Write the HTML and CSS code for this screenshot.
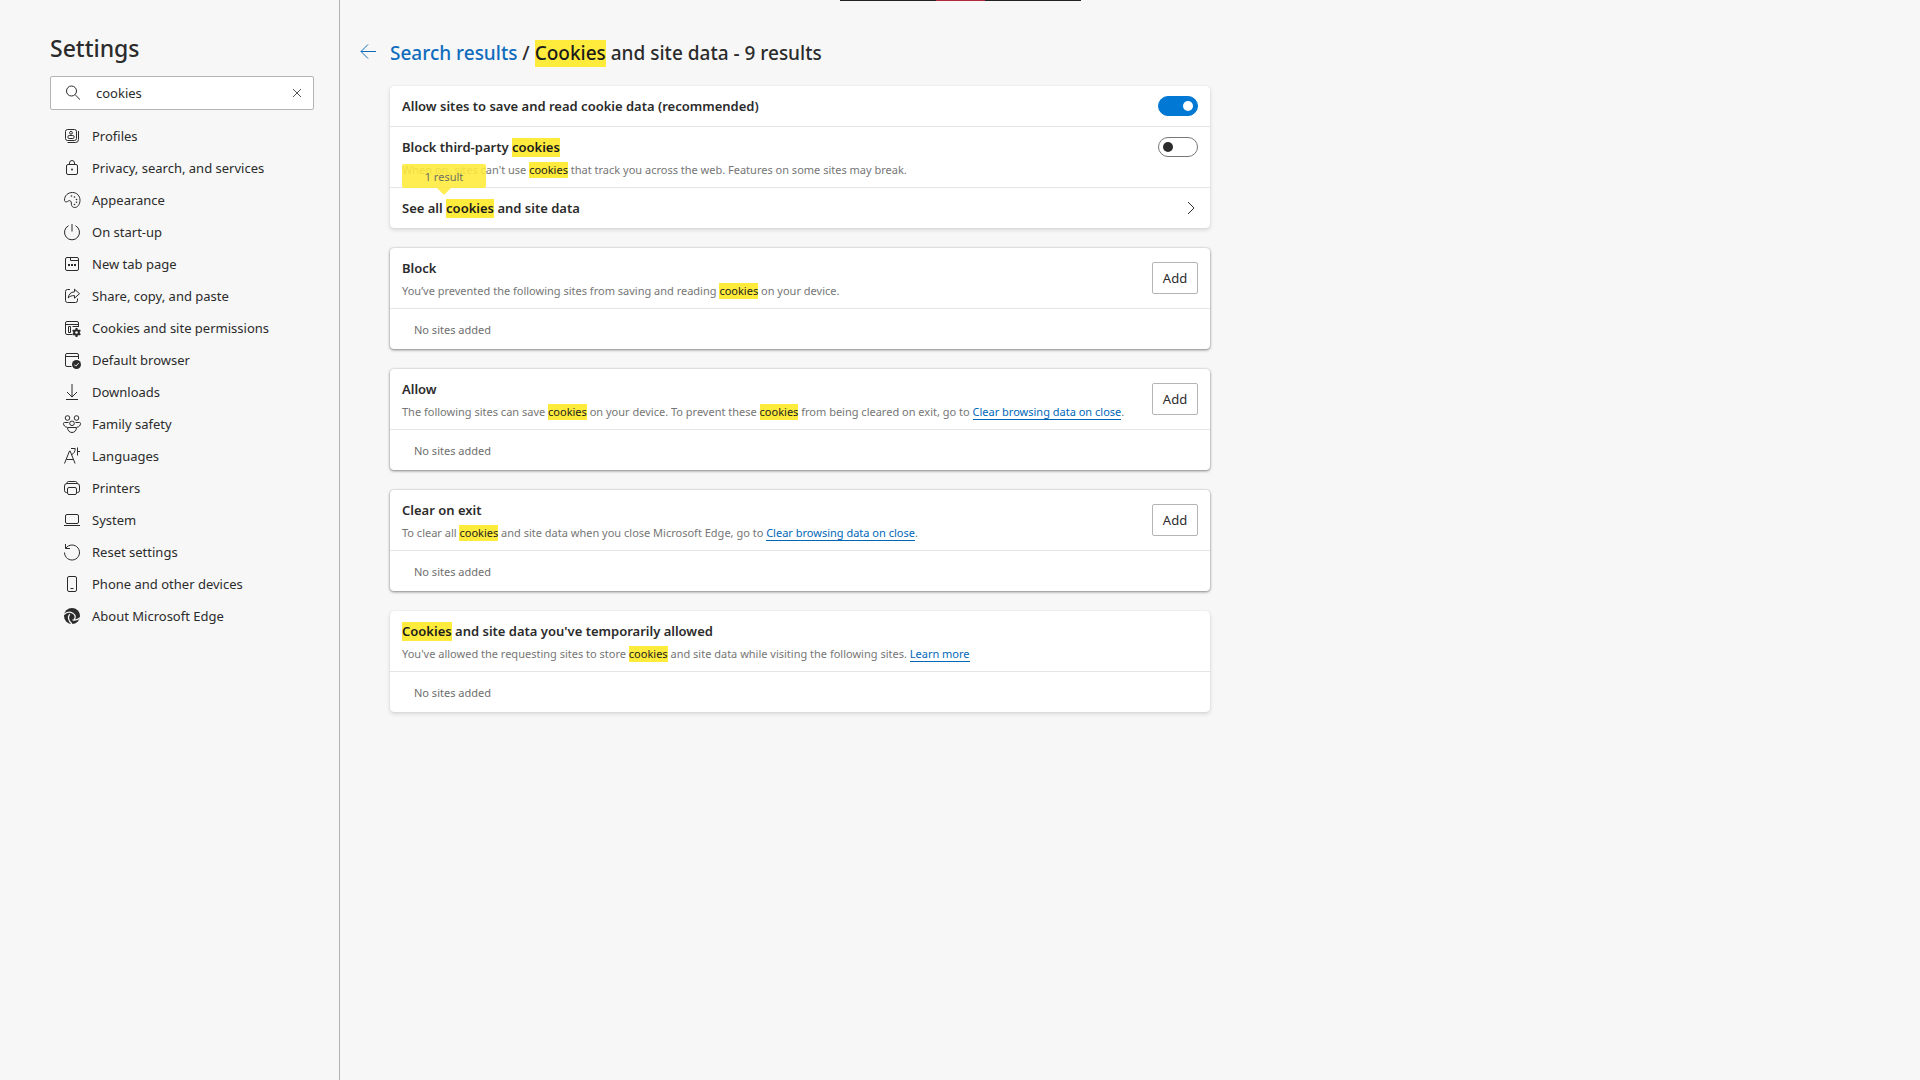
FILE: index.html
```html
<!DOCTYPE html>
<html lang="en-GB">
<head>
<meta charset="utf-8">
<title>Settings</title>
<meta name="viewport" content="width=device-width, initial-scale=1">
<link rel="stylesheet" href="styles.css">
</head>
<body>
<div class="capture-bar" aria-hidden="true"></div>
<div class="page">
  <aside class="sidebar">
    <h1 class="sidebar-title">Settings</h1>
    <form class="search" role="search">
      <svg class="search-icon" viewBox="0 0 16 16" aria-hidden="true"><circle cx="6.500" cy="6" r="5"/><path d="M10.200 9.800 15 14.600"/></svg>
      <input class="search-input" type="text" value="cookies" aria-label="Search settings">
      <button class="search-clear" type="button" aria-label="Clear search"><svg viewBox="0 0 8 8" aria-hidden="true"><path d="M0 0l8 8M8 0 0 8"/></svg></button>
    </form>
    <nav class="nav" aria-label="Settings">
      <a class="nav-item" href="#"><svg class="icon" viewBox="0 0 20 20"><rect x="3.500" y="3.500" width="11" height="11" rx="2"/><path d="M16.500 5v8.500a3 3 0 0 1-3 3H5.500"/><circle cx="9" cy="6.800" r="1.400"/><rect x="5.900" y="9.500" width="6.200" height="3" rx="1.300"/></svg>Profiles</a>
      <a class="nav-item" href="#"><svg class="icon" viewBox="0 0 20 20"><rect x="4.500" y="6.500" width="11" height="10" rx="1.500"/><path d="M7.500 6.500V5a2.500 2.500 0 0 1 5 0v1.500"/><circle class="solid" cx="10" cy="11.500" r="1"/></svg>Privacy, search, and services</a>
      <a class="nav-item" href="#"><svg class="icon" viewBox="0 0 20 20"><path d="M2.500 10.500C2.300 5.500 6 2.500 10.500 2.500c4.500 0 7.500 3.500 7.500 7.800 0 4-2.400 7.200-5.200 7.200-2.200 0-3.300-1.400-3.400-3.300 0-1.500-.2-3.300-1.700-3.600-1.500-.2-2 1.300-3.300 1.300-1 0-1.800-.5-1.900-1.400z"/><g class="solid"><circle cx="9.500" cy="6" r=".8"/><circle cx="12.500" cy="7" r=".8"/><circle cx="14.500" cy="9.500" r=".8"/><circle cx="14.500" cy="12.300" r=".8"/><circle cx="12.500" cy="14.500" r=".8"/></g></svg>Appearance</a>
      <a class="nav-item" href="#"><svg class="icon" viewBox="0 0 20 20"><path d="M10 2v7.500M6.500 3.700a7.500 7.500 0 1 0 7 0"/></svg>On start-up</a>
      <a class="nav-item" href="#"><svg class="icon" viewBox="0 0 20 20"><rect x="3.500" y="3.500" width="13" height="13" rx="1.500"/><path d="M8.500 3.500v3h8"/><path class="solid" d="M6 10h2v2H6zM9 10h2v2H9zM12 10h2v2h-2z"/></svg>New tab page</a>
      <a class="nav-item" href="#"><svg class="icon" viewBox="0 0 20 20"><path d="M8 3.500H5.500a2 2 0 0 0-2 2v9a2 2 0 0 0 2 2h8a2 2 0 0 0 2-2V12.500"/><path d="M12.500 3.200 17.500 7.700l-5 4.500V9.600c-2.800-.1-4.700.6-6.300 2.400.4-3.400 2.400-6 6.300-6.200z"/></svg>Share, copy, and paste</a>
      <a class="nav-item" href="#"><svg class="icon" viewBox="0 0 20 20"><path d="M10 16.500H5A1.500 1.500 0 0 1 3.500 15V5A1.500 1.500 0 0 1 5 3.500h10A1.500 1.500 0 0 1 16.500 5v4M3.500 6.500h13M6.500 8.500h2v6h-2zM10.500 8.500h6"/><circle class="solid" cx="14.500" cy="14.500" r="3.300"/><path class="teeth" d="M14.500 10v9M10.600 12.250l7.800 4.500M10.600 16.750l7.800-4.500"/><circle class="hole" cx="14.500" cy="14.500" r="1.300"/></svg>Cookies and site permissions</a>
      <a class="nav-item" href="#"><svg class="icon" viewBox="0 0 20 20"><path d="M9.500 16.500H5A1.500 1.500 0 0 1 3.500 15V5A1.500 1.500 0 0 1 5 3.500h10A1.500 1.500 0 0 1 16.500 5v4M3.500 6.500h13"/><circle class="solid" cx="14.500" cy="14.500" r="4.500"/><path class="tick" d="m12.300 14.600 1.500 1.500 2.900-3"/></svg>Default browser</a>
      <a class="nav-item" href="#"><svg class="icon" viewBox="0 0 20 20"><path d="M10 2v12.500M5 10l5 5 5-5M4 17.500h12"/></svg>Downloads</a>
      <a class="nav-item" href="#"><svg class="icon" viewBox="0 0 20 20"><circle cx="5.500" cy="4" r="2.300"/><circle cx="14.500" cy="4" r="2.300"/><circle cx="10" cy="9.300" r="2.300"/><path d="M6.500 8.500H2.500a1 1 0 0 0-1 1c0 2 1.500 3.500 3.500 3.700M13.500 8.500h4a1 1 0 0 1 1 1c0 2-1.500 3.500-3.500 3.700M5.500 13.500h9c0 2.800-1.800 5-4.500 5s-4.500-2.200-4.500-5z"/></svg>Family safety</a>
      <a class="nav-item" href="#"><svg class="icon" viewBox="0 0 20 20"><path d="M2.500 17.500 7.500 5h.6l5 12.500M4.500 13.500h6.600M9 2.500h4.200c0 3.200-1.200 5-3.700 6.200M15.500 1.500v8M15.500 5.500h2.500"/></svg>Languages</a>
      <a class="nav-item" href="#"><svg class="icon" viewBox="0 0 20 20"><path d="M5 5.500C5 4 5.500 3.500 6.500 3.500h7c1 0 1.500.5 1.500 2M5.500 14.500h-1a2 2 0 0 1-2-2v-4.500a2.500 2.500 0 0 1 2.500-2.500h10a2.500 2.500 0 0 1 2.500 2.500v4.500a2 2 0 0 1-2 2h-1"/><rect x="5.500" y="9.500" width="9" height="7" rx="1.500"/></svg>Printers</a>
      <a class="nav-item" href="#"><svg class="icon" viewBox="0 0 20 20"><rect x="3.500" y="4.500" width="13" height="9" rx="1.500"/><path d="M2 15.500h16"/></svg>System</a>
      <a class="nav-item" href="#"><svg class="icon" viewBox="0 0 20 20"><path d="M3.500 2v4.500h4.500M3.800 6.300A7.500 7.500 0 1 1 2.500 10.500"/></svg>Reset settings</a>
      <a class="nav-item" href="#"><svg class="icon" viewBox="0 0 20 20"><rect x="5.500" y="2.500" width="9" height="15" rx="1.500"/><path d="M8.500 14.500h3"/></svg>Phone and other devices</a>
      <a class="nav-item" href="#"><svg class="icon" viewBox="0 0 20 20"><circle class="solid" cx="10" cy="10" r="8"/><path class="swirl" d="M2 8.500C4.500 6 8 5.700 10.800 7.200c2.600 1.400 3.200 4 1.400 6.300M7.600 8.200c-2 3.300-.9 7 2.400 9.800M10.500 13.800c2.800.7 5.300.2 7.500-2"/></svg>About Microsoft Edge</a>
    </nav>
  </aside>

  <main class="content">
    <header class="heading">
      <button class="back" type="button" aria-label="Back"><svg viewBox="0 0 16 16" aria-hidden="true"><path d="M16 7.500H1M8 .5 1 7.500l7 7"/></svg></button>
      <h2 class="heading-text"><a class="crumb" href="#">Search results</a> / <mark>Cookies</mark> and site data - 9 results</h2>
    </header>

    <section class="card">
      <div class="row">
        <label class="title" for="allow-data">Allow sites to save and read cookie data (recommended)</label>
        <input class="toggle" type="checkbox" id="allow-data" checked>
      </div>
      <div class="row row-top">
        <div class="text">
          <label class="title" for="block-third">Block third-party <mark>cookies</mark></label>
          <p class="desc">When on, sites can't use <mark>cookies</mark> that track you across the web. Features on some sites may break.</p>
        </div>
        <input class="toggle" type="checkbox" id="block-third">
      </div>
      <a class="row row-link" href="#">
        <span class="title">See all <mark>cookies</mark> and site data</span>
        <svg class="chevron" viewBox="0 0 8 14" aria-hidden="true"><path d="m1 1 6 6-6 6"/></svg>
        <span class="bubble">1 result</span>
      </a>
    </section>

    <section class="card card-raised">
      <div class="row row-head">
        <div class="text">
          <h3 class="title">Block</h3>
          <p class="desc">You’ve prevented the following sites from saving and reading <mark>cookies</mark> on your device.</p>
        </div>
        <button class="add" type="button">Add</button>
      </div>
      <p class="row row-empty">No sites added</p>
    </section>

    <section class="card card-raised">
      <div class="row row-head">
        <div class="text">
          <h3 class="title">Allow</h3>
          <p class="desc">The following sites can save <mark>cookies</mark> on your device. To prevent these <mark>cookies</mark> from being cleared on exit, go to <a class="link" href="#">Clear browsing data on close</a>.</p>
        </div>
        <button class="add" type="button">Add</button>
      </div>
      <p class="row row-empty">No sites added</p>
    </section>

    <section class="card card-raised">
      <div class="row row-head">
        <div class="text">
          <h3 class="title">Clear on exit</h3>
          <p class="desc">To clear all <mark>cookies</mark> and site data when you close Microsoft Edge, go to <a class="link" href="#">Clear browsing data on close</a>.</p>
        </div>
        <button class="add" type="button">Add</button>
      </div>
      <p class="row row-empty">No sites added</p>
    </section>

    <section class="card">
      <div class="row row-head">
        <div class="text">
          <h3 class="title"><mark>Cookies</mark> and site data you've temporarily allowed</h3>
          <p class="desc">You've allowed the requesting sites to store <mark>cookies</mark> and site data while visiting the following sites. <a class="link" href="#">Learn more</a></p>
        </div>
      </div>
      <p class="row row-empty">No sites added</p>
    </section>
  </main>
</div>
</body>
</html>
```
FILE: styles.css
```css
* {
  box-sizing: border-box;
}

body {
  margin: 0;
  background: #f7f7f7;
  color: #2b2b2b;
  font: 13px/20px "Segoe UI", "Noto Sans", "Open Sans", sans-serif;
}

h1, h2, h3, p {
  margin: 0;
  font-weight: 400;
}

a {
  color: inherit;
  text-decoration: none;
}

button, input {
  margin: 0;
  font: inherit;
  color: inherit;
}

svg {
  display: block;
  flex: none;
  fill: none;
  stroke: currentColor;
}

mark {
  padding-bottom: 1px;
  background: #ffeb3b;
  color: #1b1b1b;
}

/* Strip that hangs over the top edge of the window */
.capture-bar {
  position: absolute;
  top: 0;
  left: 50%;
  width: 241px;
  height: 1px;
  margin-left: -120px;
  background: linear-gradient(90deg, #222 40%, #b02a3c 40% 60%, #222 60%);
}

.page {
  display: flex;
  min-height: 100vh;
}

.sidebar {
  flex: none;
  width: 340px;
  padding: 32px 25px 32px 50px;
  border-right: 1px solid #b2b2b2;
}

.sidebar-title {
  font-size: 23px;
  line-height: 32px;
  font-weight: 500;
}

.search {
  display: flex;
  align-items: center;
  height: 34px;
  margin: 12px 0 10px;
  padding: 0 12px 0 14px;
  background: #fff;
  border: 1px solid #b5b5b5;
  border-radius: 2px;
}

.search-icon {
  width: 16px;
  height: 16px;
}

.search-input {
  flex: 1;
  min-width: 0;
  padding: 0 0 0 15px;
  border: 0;
  outline: 0;
  background: none;
}

.search-clear {
  padding: 0;
  border: 0;
  background: none;
  color: #555;
}

.search-clear svg {
  width: 8px;
  height: 8px;
}

.nav {
  display: flex;
  flex-direction: column;
  padding-left: 12px;
}

.nav-item {
  display: flex;
  align-items: center;
  gap: 10px;
  height: 32px;
}

.icon {
  width: 20px;
  height: 20px;
}

.icon .solid {
  fill: currentColor;
  stroke: none;
}

.icon .hole {
  fill: #f7f7f7;
  stroke: none;
}

.icon .teeth {
  stroke-width: 2;
}

.icon .tick {
  stroke: #f7f7f7;
}

.icon .swirl {
  stroke: #f7f7f7;
  stroke-width: 1.300;
}

.content {
  flex: 1;
  min-width: 0;
  max-width: 890px;
  padding: 40px 20px 40px 50px;
  display: flex;
  flex-direction: column;
  gap: 20px;
}

.heading {
  display: flex;
  align-items: center;
  gap: 14px;
  height: 26px;
  margin-left: -30px;
}

.back {
  padding: 0 0 2px;
  border: 0;
  background: none;
  color: #0f6cbd;
}

.back svg {
  width: 16px;
  height: 16px;
}

.heading-text {
  font-size: 19px;
  line-height: 26px;
  font-weight: 500;
}

.crumb {
  color: #0f6cbd;
}

.card {
  background: #fff;
  border-radius: 4px;
  box-shadow: 0 2px 4px rgba(0, 0, 0, .13), 0 0 1px rgba(0, 0, 0, .2);
}

.card-raised {
  box-shadow: 0 1px 3px rgba(0, 0, 0, .45), 0 0 2px rgba(0, 0, 0, .15);
}

.row {
  display: flex;
  align-items: center;
  justify-content: space-between;
  gap: 6px;
  min-height: 40px;
  padding: 0 12px;
}

.row + .row {
  border-top: 1px solid #e5e5e5;
  min-height: 41px;
}

.row.row-top {
  align-items: flex-start;
  min-height: 61px;
  padding-top: 10px;
}

.row-head {
  min-height: 60px;
}

.row-head .text {
  padding-top: 2px;
}

.row-link {
  position: relative;
}

.row-empty {
  padding: 2px 24px 0;
  font-size: 11px;
  color: #6e6e6e;
}

.title {
  display: block;
  font-size: 13px;
  line-height: 20px;
  font-weight: 600;
}

.desc {
  margin-top: 3px;
  font-size: 11px;
  line-height: 20px;
  color: #767676;
}

.link {
  color: #0067b8;
  border-bottom: 1px solid;
}

.toggle {
  appearance: none;
  flex: none;
  width: 40px;
  height: 20px;
  padding: 4px;
  border: 1px solid #767676;
  border-radius: 10px;
  background: #fff;
}

.toggle::before {
  content: "";
  display: block;
  width: 10px;
  height: 10px;
  border-radius: 50%;
  background: #2b2b2b;
}

.toggle:checked {
  background: #0078d4;
  border-color: #0078d4;
}

.toggle:checked::before {
  margin-left: auto;
  background: #fff;
}

.chevron {
  width: 8px;
  height: 14px;
  margin-right: 3px;
}

.bubble {
  position: absolute;
  left: 12px;
  bottom: 100%;
  width: 84px;
  height: 24px;
  border-radius: 2px;
  background: #ffeb3b;
  opacity: .88;
  color: #5c5c4a;
  font-size: 11px;
  line-height: 26px;
  text-align: center;
}

.bubble::after {
  content: "";
  position: absolute;
  top: 100%;
  left: 50%;
  margin-left: -7px;
  border: 7px solid transparent;
  border-top-color: #ffeb3b;
  border-bottom: 0;
}

.add {
  flex: none;
  width: 46px;
  height: 32px;
  padding: 0;
  border: 1px solid #b5b5b5;
  border-radius: 2px;
  background: #fff;
}
```
